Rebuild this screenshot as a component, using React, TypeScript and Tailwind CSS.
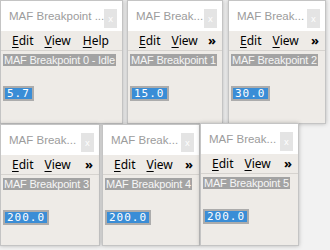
import React from 'react'

interface Win {
  left: number
  top: number
  width: number
  height: number
  title: string
  label: string
  value: string
  help?: boolean
}

const WINDOWS: Win[] = [
  { left: 0, top: 0, width: 123, height: 124, title: 'MAF Breakpoint ...', label: 'MAF Breakpoint 0 - Idle', value: '5.7', help: true },
  { left: 127, top: 0, width: 96, height: 124, title: 'MAF Break...', label: 'MAF Breakpoint 1', value: '15.0' },
  { left: 228, top: 0, width: 98, height: 124, title: 'MAF Break...', label: 'MAF Breakpoint 2', value: '30.0' },
  { left: 0, top: 124, width: 100, height: 122, title: 'MAF Break...', label: 'MAF Breakpoint 3', value: '200.0' },
  { left: 102, top: 124, width: 98, height: 122, title: 'MAF Break...', label: 'MAF Breakpoint 4', value: '200.0' },
  { left: 200, top: 123, width: 99, height: 123, title: 'MAF Break...', label: 'MAF Breakpoint 5', value: '200.0' },
]

function Mnemonic({ first, rest }: { first: string; rest: string }) {
  return (
    <span>
      <span className="underline underline-offset-2">{first}</span>
      {rest}
    </span>
  )
}

function Window({ w }: { w: Win }) {
  return (
    <div
      className="absolute flex flex-col bg-[#eeebe7] border border-[#c4c4c4] shadow-[0_0_4px_rgba(0,0,0,0.25)] overflow-hidden"
      style={{ left: w.left, top: w.top, width: w.width, height: w.height }}
    >
      {/* title bar */}
      <div className="h-[30px] bg-white flex items-start justify-between pl-[8px] pr-[5px] shrink-0">
        <span className="text-[11.5px] leading-none text-[#9c9c9c] whitespace-nowrap mt-[10px] font-['Liberation_Sans',sans-serif]">{w.title}</span>
        <span className="shrink-0 w-[13px] h-[19px] mt-[8px] bg-[#e4e4e4] text-white text-[9px] leading-[19px] text-center">x</span>
      </div>
      {/* menu */}
      <div className="h-[20px] flex items-center text-[12px] leading-none text-black border-b border-[#d6d3cf] pl-[11px] pr-[6px] shrink-0">
        <Mnemonic first="E" rest="dit" />
        <span className="ml-[11px]"><Mnemonic first="V" rest="iew" /></span>
        {w.help ? (
          <span className="ml-[12px]"><Mnemonic first="H" rest="elp" /></span>
        ) : (
          <span className="ml-auto font-bold text-[13px]">»</span>
        )}
      </div>
      <div className="flex pl-[2px] pt-[3px]">
        <span className="bg-[#a3a3a3] text-[#f6f6f6] text-[11px] leading-[12px] px-[1px] tracking-[-0.2px] whitespace-nowrap font-['Liberation_Sans',sans-serif]">{w.label}</span>
      </div>
      <div className="flex pl-[2px] pt-[20px]">
        <span className="border-2 border-[#acacac] bg-[#3a8dd6] text-white text-[11px] leading-[11px] px-[2px] font-['DejaVu_Sans_Mono',monospace] tracking-[1px]">
          {w.value}
        </span>
      </div>
    </div>
  )
}

export default function App() {
  return (
    <div className="relative w-[330px] h-[250px] bg-[#f2f2f2] overflow-hidden font-['Noto_Sans','Liberation_Sans',sans-serif]">
      {WINDOWS.map((w, i) => (
        <Window key={i} w={w} />
      ))}
    </div>
  )
}
